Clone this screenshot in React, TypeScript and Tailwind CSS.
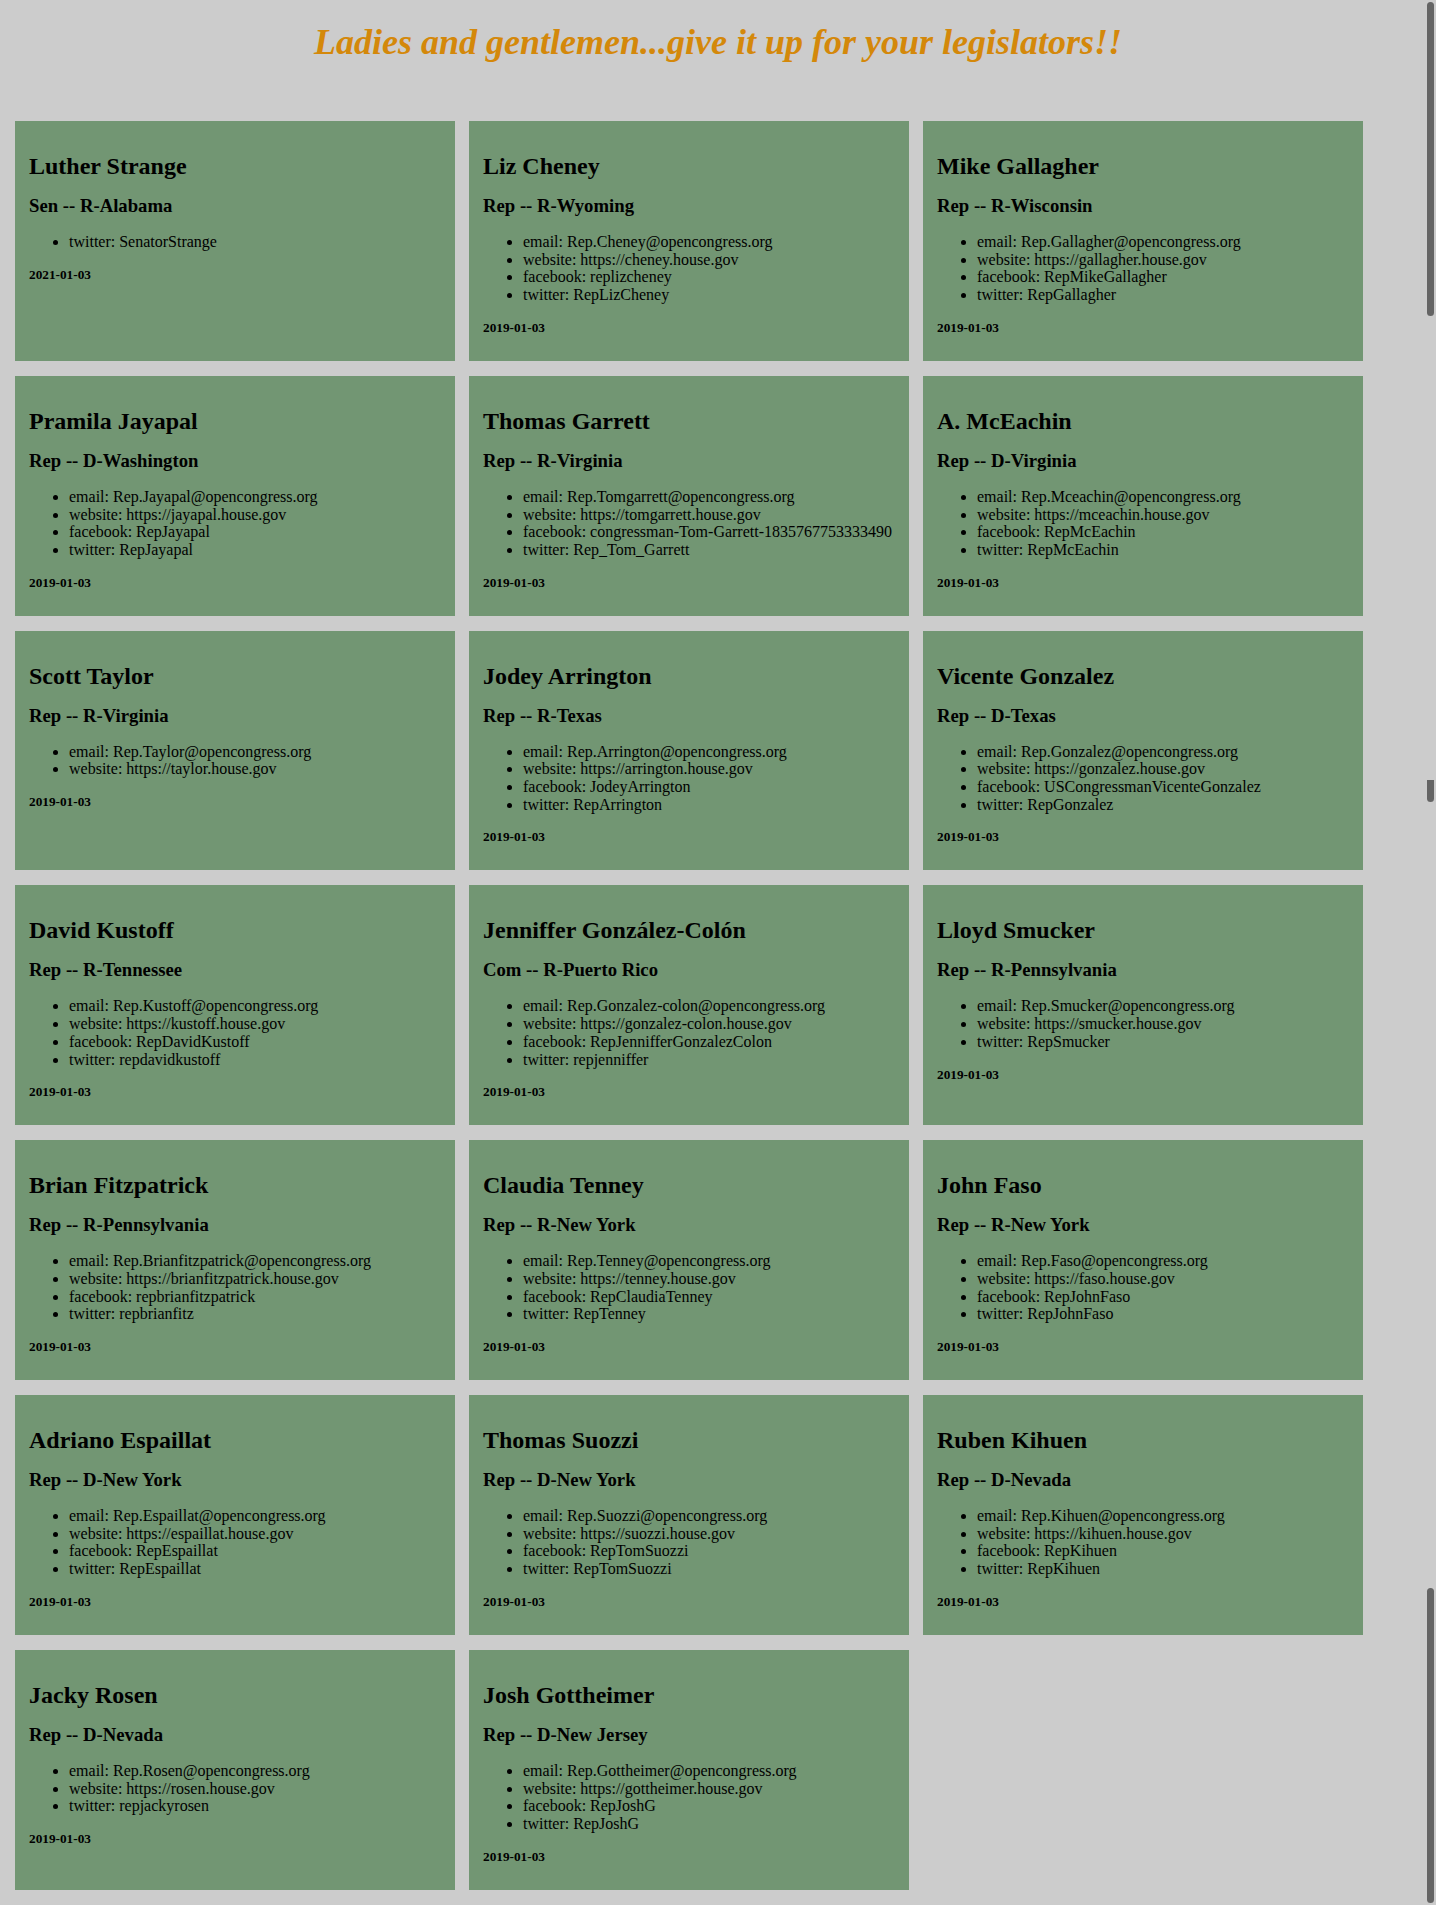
type Member = {
  name: string;
  role: string;
  links: [string, string][];
  date: string;
};

const members: Member[] = [
  { name: "Luther Strange", role: "Sen -- R-Alabama", links: [["twitter", "SenatorStrange"]], date: "2021-01-03" },
  {
    name: "Liz Cheney",
    role: "Rep -- R-Wyoming",
    links: [
      ["email", "Rep.Cheney@opencongress.org"],
      ["website", "https://cheney.house.gov"],
      ["facebook", "replizcheney"],
      ["twitter", "RepLizCheney"],
    ],
    date: "2019-01-03",
  },
  {
    name: "Mike Gallagher",
    role: "Rep -- R-Wisconsin",
    links: [
      ["email", "Rep.Gallagher@opencongress.org"],
      ["website", "https://gallagher.house.gov"],
      ["facebook", "RepMikeGallagher"],
      ["twitter", "RepGallagher"],
    ],
    date: "2019-01-03",
  },
  {
    name: "Pramila Jayapal",
    role: "Rep -- D-Washington",
    links: [
      ["email", "Rep.Jayapal@opencongress.org"],
      ["website", "https://jayapal.house.gov"],
      ["facebook", "RepJayapal"],
      ["twitter", "RepJayapal"],
    ],
    date: "2019-01-03",
  },
  {
    name: "Thomas Garrett",
    role: "Rep -- R-Virginia",
    links: [
      ["email", "Rep.Tomgarrett@opencongress.org"],
      ["website", "https://tomgarrett.house.gov"],
      ["facebook", "congressman-Tom-Garrett-1835767753333490"],
      ["twitter", "Rep_Tom_Garrett"],
    ],
    date: "2019-01-03",
  },
  {
    name: "A. McEachin",
    role: "Rep -- D-Virginia",
    links: [
      ["email", "Rep.Mceachin@opencongress.org"],
      ["website", "https://mceachin.house.gov"],
      ["facebook", "RepMcEachin"],
      ["twitter", "RepMcEachin"],
    ],
    date: "2019-01-03",
  },
  {
    name: "Scott Taylor",
    role: "Rep -- R-Virginia",
    links: [
      ["email", "Rep.Taylor@opencongress.org"],
      ["website", "https://taylor.house.gov"],
    ],
    date: "2019-01-03",
  },
  {
    name: "Jodey Arrington",
    role: "Rep -- R-Texas",
    links: [
      ["email", "Rep.Arrington@opencongress.org"],
      ["website", "https://arrington.house.gov"],
      ["facebook", "JodeyArrington"],
      ["twitter", "RepArrington"],
    ],
    date: "2019-01-03",
  },
  {
    name: "Vicente Gonzalez",
    role: "Rep -- D-Texas",
    links: [
      ["email", "Rep.Gonzalez@opencongress.org"],
      ["website", "https://gonzalez.house.gov"],
      ["facebook", "USCongressmanVicenteGonzalez"],
      ["twitter", "RepGonzalez"],
    ],
    date: "2019-01-03",
  },
  {
    name: "David Kustoff",
    role: "Rep -- R-Tennessee",
    links: [
      ["email", "Rep.Kustoff@opencongress.org"],
      ["website", "https://kustoff.house.gov"],
      ["facebook", "RepDavidKustoff"],
      ["twitter", "repdavidkustoff"],
    ],
    date: "2019-01-03",
  },
  {
    name: "Jenniffer González-Colón",
    role: "Com -- R-Puerto Rico",
    links: [
      ["email", "Rep.Gonzalez-colon@opencongress.org"],
      ["website", "https://gonzalez-colon.house.gov"],
      ["facebook", "RepJennifferGonzalezColon"],
      ["twitter", "repjenniffer"],
    ],
    date: "2019-01-03",
  },
  {
    name: "Lloyd Smucker",
    role: "Rep -- R-Pennsylvania",
    links: [
      ["email", "Rep.Smucker@opencongress.org"],
      ["website", "https://smucker.house.gov"],
      ["twitter", "RepSmucker"],
    ],
    date: "2019-01-03",
  },
  {
    name: "Brian Fitzpatrick",
    role: "Rep -- R-Pennsylvania",
    links: [
      ["email", "Rep.Brianfitzpatrick@opencongress.org"],
      ["website", "https://brianfitzpatrick.house.gov"],
      ["facebook", "repbrianfitzpatrick"],
      ["twitter", "repbrianfitz"],
    ],
    date: "2019-01-03",
  },
  {
    name: "Claudia Tenney",
    role: "Rep -- R-New York",
    links: [
      ["email", "Rep.Tenney@opencongress.org"],
      ["website", "https://tenney.house.gov"],
      ["facebook", "RepClaudiaTenney"],
      ["twitter", "RepTenney"],
    ],
    date: "2019-01-03",
  },
  {
    name: "John Faso",
    role: "Rep -- R-New York",
    links: [
      ["email", "Rep.Faso@opencongress.org"],
      ["website", "https://faso.house.gov"],
      ["facebook", "RepJohnFaso"],
      ["twitter", "RepJohnFaso"],
    ],
    date: "2019-01-03",
  },
  {
    name: "Adriano Espaillat",
    role: "Rep -- D-New York",
    links: [
      ["email", "Rep.Espaillat@opencongress.org"],
      ["website", "https://espaillat.house.gov"],
      ["facebook", "RepEspaillat"],
      ["twitter", "RepEspaillat"],
    ],
    date: "2019-01-03",
  },
  {
    name: "Thomas Suozzi",
    role: "Rep -- D-New York",
    links: [
      ["email", "Rep.Suozzi@opencongress.org"],
      ["website", "https://suozzi.house.gov"],
      ["facebook", "RepTomSuozzi"],
      ["twitter", "RepTomSuozzi"],
    ],
    date: "2019-01-03",
  },
  {
    name: "Ruben Kihuen",
    role: "Rep -- D-Nevada",
    links: [
      ["email", "Rep.Kihuen@opencongress.org"],
      ["website", "https://kihuen.house.gov"],
      ["facebook", "RepKihuen"],
      ["twitter", "RepKihuen"],
    ],
    date: "2019-01-03",
  },
  {
    name: "Jacky Rosen",
    role: "Rep -- D-Nevada",
    links: [
      ["email", "Rep.Rosen@opencongress.org"],
      ["website", "https://rosen.house.gov"],
      ["twitter", "repjackyrosen"],
    ],
    date: "2019-01-03",
  },
  {
    name: "Josh Gottheimer",
    role: "Rep -- D-New Jersey",
    links: [
      ["email", "Rep.Gottheimer@opencongress.org"],
      ["website", "https://gottheimer.house.gov"],
      ["facebook", "RepJoshG"],
      ["twitter", "RepJoshG"],
    ],
    date: "2019-01-03",
  },
];

function Card({ m }: { m: Member }) {
  return (
    <div className="bg-[#729673] px-[14px] pt-[31px] pb-[26px] text-black">
      <h2 className="text-[24px] leading-[28px] font-bold">{m.name}</h2>
      <h3 className="mt-[15px] text-[18.72px] leading-[22px] font-bold">{m.role}</h3>
      <ul className="mt-[16px] list-disc pl-[40px] text-[16px] leading-[17.7px]">
        {m.links.map(([k, v], i) => (
          <li key={i} className="whitespace-nowrap">
            {k}: {v}
          </li>
        ))}
      </ul>
      <h5 className="mt-[16px] text-[13.28px] leading-[15px] font-bold">{m.date}</h5>
    </div>
  );
}

export default function App() {
  return (
    <div className="relative min-h-[1905px] bg-[#cccccc] font-['Liberation_Serif',serif]">
      <h1 className="pt-[21px] text-center text-[36px] leading-[42px] font-bold italic text-[#d4880a]">
        Ladies and gentlemen...give it up for your legislators!!
      </h1>
      <div className="mt-[58px] grid w-[1378px] grid-cols-[440px_440px_440px] gap-x-[14px] gap-y-[15px] pl-[15px] pb-[14px]">
        {members.map((m, i) => (
          <Card key={i} m={m} />
        ))}
      </div>

      {/* overlay scrollbar pieces from the stitched capture */}
      <div className="absolute right-[2px] top-[2px] h-[314px] w-[7px] rounded-full bg-[#646464]" />
      <div className="absolute right-[2px] top-[780px] h-[22px] w-[7px] rounded-b-full bg-[#646464]" />
      <div className="absolute right-[2px] top-[1588px] h-[315px] w-[7px] rounded-full bg-[#646464]" />
    </div>
  );
}
